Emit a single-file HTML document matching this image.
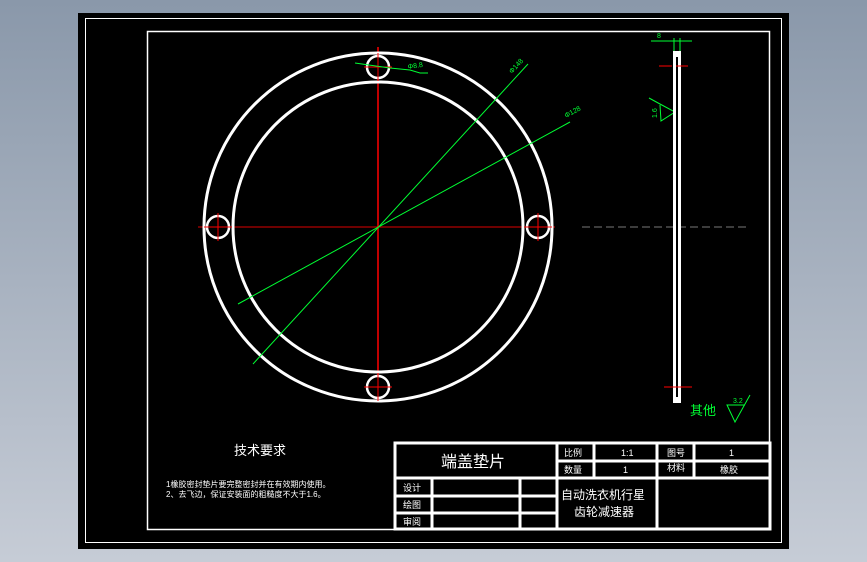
<!DOCTYPE html>
<html><head><meta charset="utf-8"><style>
html,body{margin:0;padding:0;background:#8a98aa;width:867px;height:562px;overflow:hidden}
svg{display:block}
text{font-family:"Liberation Sans","Noto Sans CJK SC",sans-serif}
</style></head><body>
<svg width="867" height="562" viewBox="0 0 867 562">
<defs><linearGradient id="g" x1="0" y1="0" x2="0" y2="1"><stop offset="0" stop-color="#8a98aa"/><stop offset="1" stop-color="#c6ccd6"/></linearGradient></defs>
<rect width="867" height="562" fill="url(#g)"/>
<rect x="78" y="13" width="711" height="536" fill="#000"/>
<rect x="85.5" y="18.5" width="696" height="524" fill="none" stroke="#fff" stroke-width="1"/>
<rect x="147.5" y="31.5" width="622" height="498" fill="none" stroke="#fff" stroke-width="1.5"/>
<!-- center lines -->
<line x1="198" y1="227" x2="555" y2="227" stroke="#d00" stroke-width="1"/>
<line x1="378" y1="47" x2="378" y2="400" stroke="#f00" stroke-width="1.5"/>
<line x1="582" y1="227" x2="748" y2="227" stroke="#777" stroke-width="1" stroke-dasharray="8,4"/>
<!-- circles -->
<circle cx="378" cy="227" r="174" fill="none" stroke="#fff" stroke-width="3"/>
<circle cx="378" cy="227" r="145" fill="none" stroke="#fff" stroke-width="3"/>
<g fill="#000" stroke="#fff" stroke-width="2.5">
<circle cx="378" cy="67" r="11"/><circle cx="378" cy="387" r="11"/>
<circle cx="218" cy="227" r="11"/><circle cx="538" cy="227" r="11"/>
</g>
<g stroke="#f00" stroke-width="1">
<line x1="364" y1="67" x2="392" y2="67"/><line x1="378" y1="53" x2="378" y2="81"/>
<line x1="364" y1="387" x2="392" y2="387"/><line x1="378" y1="373" x2="378" y2="401"/>
<line x1="204" y1="227" x2="232" y2="227"/><line x1="218" y1="213" x2="218" y2="241"/>
<line x1="524" y1="227" x2="552" y2="227"/><line x1="538" y1="213" x2="538" y2="241"/>
</g>
<!-- green dims -->
<g stroke="#0f3" stroke-width="1" fill="none">
<line x1="253" y1="364" x2="528" y2="64"/>
<line x1="238" y1="304" x2="570" y2="122"/>
<polyline points="355,63 390,68 410,70 420,73 428,73"/>
<line x1="651" y1="41" x2="692" y2="41"/>
<line x1="674" y1="38" x2="674" y2="52"/><line x1="680" y1="38" x2="680" y2="52"/>
<polyline points="649,98 660,104 675,112 661,121 660,105"/>
<polyline points="750,395 735,422 727,405 745,405"/>
</g>
<g fill="#0f3" font-size="7">
<text x="408" y="69" transform="rotate(-8 408 69)">Φ8.8</text>
<text x="512" y="74" transform="rotate(-48 512 74)">Φ148</text>
<text x="566" y="118" transform="rotate(-28 566 118)">Φ128</text>
<text x="657" y="38">8</text>
<text x="657" y="118" transform="rotate(-90 657 118)">1.6</text>
<text x="733" y="403">3.2</text>
<text x="690" y="415" font-size="13">其他</text>
</g>
<!-- side plate -->
<rect x="673" y="51" width="8" height="352" fill="#fff"/>
<rect x="676" y="57" width="2" height="340" fill="#000"/>
<line x1="659" y1="66" x2="672" y2="66" stroke="#f00"/><line x1="676" y1="66" x2="688" y2="66" stroke="#f00"/>
<line x1="664" y1="387" x2="692" y2="387" stroke="#f00"/>
<!-- title block -->
<g stroke="#fff" stroke-width="3" fill="none">
<rect x="395" y="443" width="375" height="86"/>
<line x1="557" y1="461" x2="770" y2="461"/>
<line x1="395" y1="478" x2="770" y2="478"/>
<line x1="395" y1="496" x2="557" y2="496"/>
<line x1="395" y1="513" x2="557" y2="513"/>
<line x1="557" y1="443" x2="557" y2="530"/>
<line x1="594" y1="443" x2="594" y2="478"/>
<line x1="657" y1="443" x2="657" y2="530"/>
<line x1="694" y1="443" x2="694" y2="478"/>
<line x1="432" y1="478" x2="432" y2="530"/>
<line x1="520" y1="478" x2="520" y2="530"/>
</g>
<g fill="#fff" font-size="9">
<text x="441" y="467" font-size="16">端盖垫片</text>
<text x="564" y="456">比例</text><text x="621" y="456">1:1</text>
<text x="667" y="456">图号</text><text x="729" y="456">1</text>
<text x="564" y="473">数量</text><text x="623" y="473">1</text>
<text x="667" y="471">材料</text><text x="720" y="473">橡胶</text>
<text x="403" y="491">设计</text><text x="403" y="508">绘图</text><text x="403" y="525">审阅</text>
<text x="561" y="499" font-size="12">自动洗衣机行星</text>
<text x="574" y="516" font-size="12">齿轮减速器</text>
<text x="234" y="455" font-size="13">技术要求</text>
<text x="166" y="487" font-size="8">1橡胶密封垫片要完整密封并在有效期内使用。</text>
<text x="166" y="497" font-size="8">2、去飞边，保证安装面的粗糙度不大于1.6。</text>
</g>
</svg>
</body></html>
